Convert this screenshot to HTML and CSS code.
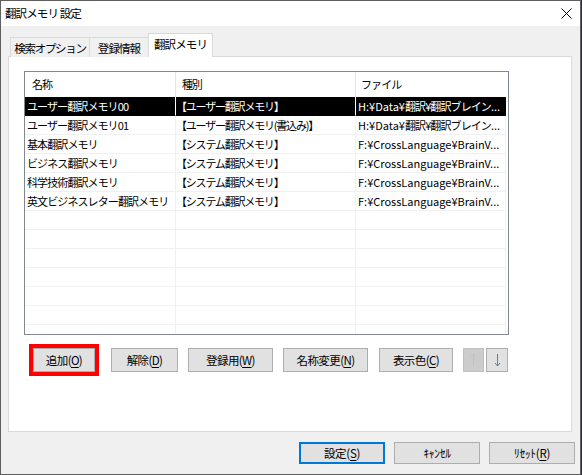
FILE: index.html
```html
<!DOCTYPE html>
<html lang="ja">
<head>
<meta charset="utf-8">
<link rel="stylesheet" href="styles.css">
</head>
<body>
<div class="window">
  <div class="titlebar">
    <span class="title">翻訳メモリ 設定</span>
    <svg class="close" width="11" height="11" viewBox="0 0 11 11"><path d="M0.5 0.5 L10.5 10.5 M10.5 0.5 L0.5 10.5" stroke="#000" stroke-width="1" fill="none"/></svg>
  </div>
  <div class="content">
    <div class="tabs">
      <div class="tab t1">検索オプション</div>
      <div class="tab t2">登録情報</div>
      <div class="tab t3 active">翻訳メモリ</div>
    </div>
    <div class="panel">
      <div class="list">
        <div class="row head">
          <div class="c c1">名称</div>
          <div class="c c2">種別</div>
          <div class="c c3">ファイル</div>
        </div>
        <div class="row sel">
          <div class="c c1">ユーザー翻訳メモリ00</div>
          <div class="c c2">【ユーザー翻訳メモリ】</div>
          <div class="c c3">H:¥Data¥<span class="j">翻訳¥翻訳ブレイン</span>...</div>
        </div>
        <div class="row">
          <div class="c c1">ユーザー翻訳メモリ01</div>
          <div class="c c2">【ユーザー翻訳メモリ(書込み)】</div>
          <div class="c c3">H:¥Data¥<span class="j">翻訳¥翻訳ブレイン</span>...</div>
        </div>
        <div class="row">
          <div class="c c1">基本翻訳メモリ</div>
          <div class="c c2">【システム翻訳メモリ】</div>
          <div class="c c3">F:¥CrossLanguage¥BrainV...</div>
        </div>
        <div class="row">
          <div class="c c1">ビジネス翻訳メモリ</div>
          <div class="c c2">【システム翻訳メモリ】</div>
          <div class="c c3">F:¥CrossLanguage¥BrainV...</div>
        </div>
        <div class="row">
          <div class="c c1">科学技術翻訳メモリ</div>
          <div class="c c2">【システム翻訳メモリ】</div>
          <div class="c c3">F:¥CrossLanguage¥BrainV...</div>
        </div>
        <div class="row">
          <div class="c c1">英文ビジネスレター翻訳メモリ</div>
          <div class="c c2">【システム翻訳メモリ】</div>
          <div class="c c3">F:¥CrossLanguage¥BrainV...</div>
        </div>
        <div class="row"><div class="c c1"></div><div class="c c2"></div><div class="c c3"></div></div>
        <div class="row"><div class="c c1"></div><div class="c c2"></div><div class="c c3"></div></div>
        <div class="row"><div class="c c1"></div><div class="c c2"></div><div class="c c3"></div></div>
        <div class="row"><div class="c c1"></div><div class="c c2"></div><div class="c c3"></div></div>
        <div class="row"><div class="c c1"></div><div class="c c2"></div><div class="c c3"></div></div>
        <div class="row"><div class="c c1"></div><div class="c c2"></div><div class="c c3"></div></div>
        <div class="row"><div class="c c1"></div><div class="c c2"></div><div class="c c3"></div></div>
      </div>
      <div class="btnrow">
        <button class="btn b-add">追加(<u>O</u>)</button>
        <button class="btn b-del">解除(<u>D</u>)</button>
        <button class="btn b-reg">登録用(<u>W</u>)</button>
        <button class="btn b-ren">名称変更(<u>N</u>)</button>
        <button class="btn b-col">表示色(<u>C</u>)</button>
        <button class="btn b-up" disabled>
          <svg width="7" height="14" viewBox="0 0 7 14"><path d="M3.5 1 V13 M1 4 L3.5 1 L6 4" stroke="#b7c5d2" stroke-width="1" fill="none"/></svg>
        </button>
        <button class="btn b-down">
          <svg width="7" height="14" viewBox="0 0 7 14"><path d="M3.5 1 V13 M1 10 L3.5 13 L6 10" stroke="#5f7f9c" stroke-width="1" fill="none"/></svg>
        </button>
      </div>
    </div>
    <div class="footer">
      <button class="btn fb default">設定(<u>S</u>)</button>
      <button class="btn fb">ｷｬﾝｾﾙ</button>
      <button class="btn fb">ﾘｾｯﾄ(<u>R</u>)</button>
    </div>
  </div>
</div>
</body>
</html>
```

FILE: styles.css
```css
html {
  background: #2e2e38;
}
body {
  margin: 0;
  font-family: "Noto Sans CJK JP", "Noto Sans", sans-serif;
  font-size: 11px;
  letter-spacing: -0.9px;
  color: #000;
}
.window {
  width: 581px;
  height: 475px;
  box-sizing: border-box;
  border: 1px solid #5f5f5f;
  background: #f0f0f0;
  display: flex;
  flex-direction: column;
}
.titlebar {
  height: 25px;
  background: #fff;
  display: flex;
  align-items: center;
  justify-content: space-between;
  padding: 0 8px 0 4px;
}
.title {
  font-size: 11.5px;
  line-height: 14px;
  margin-top: -1px;
}
.close {
  display: block;
  margin-top: -1px;
}
.content {
  flex: 1;
  display: flex;
  flex-direction: column;
}
.tabs {
  display: flex;
  align-items: flex-end;
  padding: 7px 0 0 9px;
  margin-bottom: -1px;
  position: relative;
  z-index: 1;
}
.tab {
  box-sizing: border-box;
  height: 20px;
  border: 1px solid #d9d9d9;
  border-bottom: none;
  background: #f0f0f0;
  display: flex;
  align-items: center;
  justify-content: center;
  padding-top: 1px;
  font-size: 11.5px;
}
.t1 { width: 79px; border-right: none; letter-spacing: -1.3px; }
.t2 { width: 59px; border-right: none; }
.t3 { width: 65px; }
.tab.active {
  height: 24px;
  background: #fff;
  padding-top: 0;
  padding-bottom: 3px;
}
.panel {
  margin-left: 7px;
  width: 564px;
  height: 376px;
  box-sizing: border-box;
  border: 1px solid #d9d9d9;
  background: #fff;
  padding: 14px 0 0 15px;
}
.list {
  width: 485px;
  height: 264px;
  box-sizing: border-box;
  border: 1px solid #828790;
  overflow: hidden;
}
.row {
  display: flex;
  height: 19px;
}
.c {
  box-sizing: border-box;
  height: 19px;
  border-right: 1px solid #f0f0f0;
  border-bottom: 1px solid #f0f0f0;
  white-space: nowrap;
  overflow: hidden;
  line-height: 18px;
  padding-left: 2px;
}
.c1 { width: 151px; }
.c2 { width: 180px; padding-left: 0; letter-spacing: -1.2px; }
.c3 { width: 150px; letter-spacing: 0; }
.c3 .j { letter-spacing: -0.9px; }
.row.head {
  height: 25px;
}
.row.head .c {
  height: 25px;
  line-height: 24px;
  border-bottom: none;
  border-right-color: #e5e5e5;
  padding-left: 7px;
}
.row.head .c2 { padding-left: 6px; }
.row.head .c3 { padding-left: 5px; border-right: none; letter-spacing: -0.9px; }
.row.sel .c {
  background: #000;
  color: #fff;
  border-bottom-color: #000;
}
.row.sel .c1, .row.sel .c2 { border-right-color: #fff; }
.row.sel .c3 { border-right-color: #000; }
.btnrow {
  display: flex;
  margin-top: 13px;
  margin-left: 9px;
}
.btn {
  box-sizing: border-box;
  height: 24px;
  border: 1px solid #adadad;
  background: #e1e1e1;
  font-family: inherit;
  font-size: 11.5px;
  letter-spacing: -0.6px;
  color: #000;
  padding: 0;
  margin: 0;
  display: flex;
  align-items: center;
  justify-content: center;
  line-height: 14px;
}
.btn u { text-underline-offset: 2px; }
.b-add { width: 62px; outline: 4px solid #ff0000; outline-offset: 0; }
.b-del { width: 67px; margin-left: 16px; }
.b-reg { width: 85px; margin-left: 10px; }
.b-ren { width: 85px; margin-left: 10px; }
.b-col { width: 74px; margin-left: 11px; }
.b-up { width: 21px; margin-left: 10px; background: #cccccc; border-color: #bfbfbf; }
.b-down { width: 22px; margin-left: 2px; }
.footer {
  display: flex;
  justify-content: flex-end;
  margin-top: 10px;
  padding-right: 5px;
}
.fb {
  width: 86px;
  height: 22px;
  margin-left: 9px;
  letter-spacing: -0.3px;
}
.fb.default {
  border: 2px solid #0078d7;
}
```
